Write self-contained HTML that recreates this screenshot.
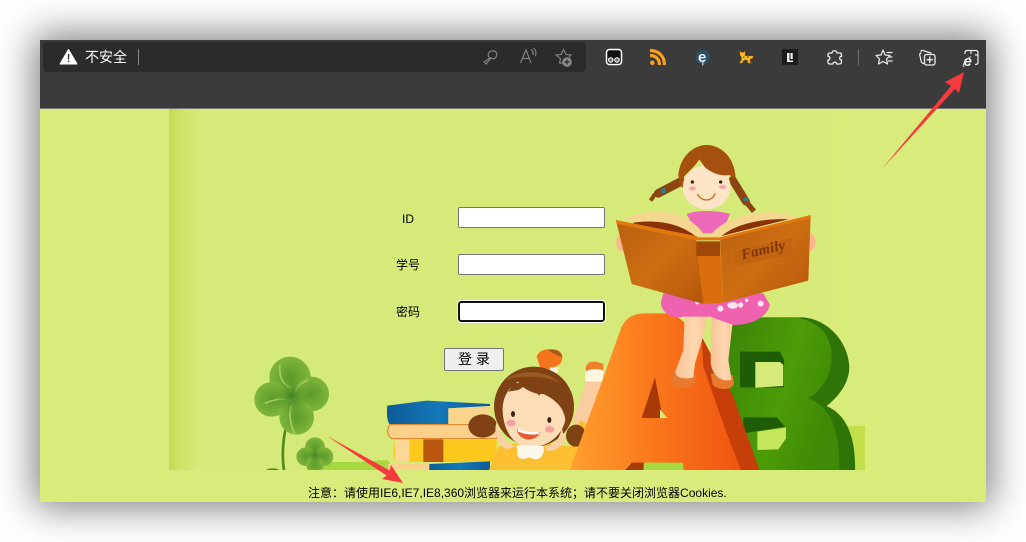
<!DOCTYPE html>
<html lang="zh"><head><meta charset="utf-8"><title>登录</title>
<style>
html,body{margin:0;padding:0;background:#fff}
body{width:1026px;height:542px;position:relative;overflow:hidden;font-family:"Liberation Sans","Noto Sans CJK SC",sans-serif}
#win{position:absolute;left:40px;top:40px;width:946px;height:462px;background:#d9ec7b;box-shadow:0 0 36px 5px rgba(0,0,0,.52)}
#bar{position:absolute;left:40px;top:40px;width:946px;height:68px;background:#3b3b3b;border-bottom:1px solid #777}
#addr{position:absolute;left:43px;top:42px;width:543px;height:30px;background:#2b2b2b;border-radius:4px}
#page{position:absolute;left:169px;top:109px;width:696px;height:361px;background:linear-gradient(90deg,#d6ea79,#d6ea79 85%,#d9ec7b)}
#stripe{position:absolute;left:169px;top:109px;width:30px;height:361px;background:linear-gradient(90deg,#c6da55,#cfe368 40%,#d6ea79)}
svg{position:absolute;left:0;top:0}
.t{position:absolute;white-space:nowrap;color:#000;font-size:12px;line-height:16px}
.i{position:absolute;box-sizing:border-box;left:458px;width:147px;height:21px;background:#fff;border:1px solid #767676;border-radius:2px}
#btn{position:absolute;box-sizing:border-box;left:444px;top:348px;width:60px;height:23px;background:#efefef;border:1px solid #767676;border-radius:2px;font-size:14px;line-height:21px;text-align:center;color:#000}
</style></head><body>
<div id="win"></div><div id="bar"></div><div id="addr"></div><div id="page"></div><div id="stripe"></div>

<svg width="1026" height="542" viewBox="0 0 1026 542">
<defs>
<clipPath id="c"><rect x="169" y="109" width="696" height="361"/></clipPath>
<linearGradient id="ga" x1="0" y1="0" x2="1" y2="0"><stop offset="0" stop-color="#ffa030"/><stop offset=".45" stop-color="#fb7a1c"/><stop offset="1" stop-color="#ef5510"/></linearGradient>
<linearGradient id="gb" x1="0" y1="0" x2="1" y2="1"><stop offset="0" stop-color="#b8600f"/><stop offset=".5" stop-color="#cd6e12"/><stop offset="1" stop-color="#b4560c"/></linearGradient>
<linearGradient id="gl" x1="0" y1="0" x2="1" y2="0"><stop offset="0" stop-color="#f8c498"/><stop offset=".6" stop-color="#ffd8b0"/><stop offset="1" stop-color="#f8c496"/></linearGradient>
<linearGradient id="gg" x1="0" y1="0" x2="1" y2=".4"><stop offset="0" stop-color="#3a8408"/><stop offset=".6" stop-color="#4c9c08"/><stop offset="1" stop-color="#3f8a06"/></linearGradient>
<linearGradient id="gbl" x1="0" y1="0" x2="1" y2="0"><stop offset="0" stop-color="#0d5a98"/><stop offset=".5" stop-color="#1578b8"/><stop offset="1" stop-color="#0d5a98"/></linearGradient>
<radialGradient id="gc" cx=".5" cy=".5" r=".6"><stop offset="0" stop-color="#5b9a2a"/><stop offset="1" stop-color="#86bc40"/></radialGradient>
<radialGradient id="gcc" cx=".5" cy=".5" r=".5"><stop offset="0" stop-color="#3f8220"/><stop offset="1" stop-color="#5b9a2a" stop-opacity="0"/></radialGradient>
</defs>
<g clip-path="url(#c)">
<rect x="825" y="426" width="40" height="44" fill="#c3e04a"/>
<rect x="320" y="462" width="70" height="8" fill="#a8d840"/>

<!-- zoom 5 coords: clover, books -->
<g transform="translate(240 340) scale(.33333)">
<path d="M136 270C128 310 126 350 132 392" fill="none" stroke="#4d8a20" stroke-width="8"/>
<g fill="url(#gc)"><circle cx="150" cy="112" r="62"/><circle cx="95" cy="178" r="52"/><circle cx="215" cy="162" r="52"/><circle cx="170" cy="232" r="52"/></g>
<path d="M120 75C115 120 135 135 155 145M205 120C180 130 170 140 165 160M75 190C110 175 130 175 145 180M165 285C150 250 145 220 155 195" stroke="#a4cf62" stroke-width="5" fill="none"/>
<circle cx="155" cy="170" r="55" fill="url(#gcc)"/>
<path d="M214 390L222 340" stroke="#4d8a20" stroke-width="4"/>
<g fill="url(#gc)"><circle cx="225" cy="322" r="30"/><circle cx="197" cy="350" r="28"/><circle cx="252" cy="350" r="28"/><circle cx="225" cy="375" r="26"/></g>
<circle cx="225" cy="345" r="26" fill="url(#gcc)"/>
<path d="M240 390C300 370 360 365 445 360V392H240Z" fill="#a8d840"/>
<ellipse cx="98" cy="392" rx="20" ry="7" fill="#4b8a20"/>
<!-- books -->
<path d="M442 197L560 182L750 192V198L625 205V252H448C440 240 440 215 442 197Z" fill="url(#gbl)"/>
<path d="M625 205L750 198V250H625Z" fill="#fbd48c"/>
<path d="M450 254H770V296H455C440 285 440 265 450 254Z" fill="#fbd08a" stroke="#e07a20" stroke-width="3"/>
<path d="M465 300H770V366H465C460 345 460 320 465 300Z" fill="#fcc81e"/>
<path d="M465 300H508V366H465Z" fill="#fbd898"/>
<rect x="550" y="298" width="60" height="68" fill="#b9560f"/>
<path d="M445 372H570V392H445Z" fill="#fbd08a"/>
<path d="M568 372L750 364V392H568Z" fill="url(#gbl)"/>
</g>

<!-- zoom 12 coords: lying girl (origin 480,340) -->
<g transform="translate(480 340) scale(.33333)">
<path d="M170 50C175 30 200 25 225 28C248 32 252 55 240 72L212 88L180 82Z" fill="#f5741c"/>
<path d="M205 30C225 25 245 35 248 52C230 45 215 40 205 30Z" fill="#a85c1c"/>
<rect x="210" y="82" width="24" height="16" fill="#fff6e0"/>
<path d="M318 90C315 70 330 62 350 65L370 72V118L318 120Z" fill="#f07f2c"/>
<path d="M316 96C330 85 355 85 370 92V132L316 124Z" fill="#fff6e0"/>
<path d="M318 125L370 125V240L300 290L280 240Z" fill="#f9cda0"/>
<path d="M25 395L55 320L110 310H200L270 320L300 240L340 260L320 395Z" fill="#fcbf32"/>
<ellipse cx="8" cy="258" rx="43" ry="35" fill="#7e4214"/>
<ellipse cx="288" cy="287" rx="30" ry="33" fill="#7e4214"/>
<ellipse cx="162" cy="200" rx="120" ry="120" fill="#7e4214"/>
<path d="M75 120C110 90 200 85 240 130C200 105 120 105 75 120Z" fill="#9a5a24"/>
<path d="M68 215C65 165 95 135 115 125C130 150 170 165 190 162C220 175 252 200 256 240C245 290 200 322 150 322C105 320 72 280 68 215Z" fill="#fddcb8"/>
<path d="M100 130L85 155L115 150L140 135L180 168L175 140L190 120Z" fill="#7e4214"/>
<ellipse cx="99" cy="222" rx="6" ry="9" fill="#3a2410"/><ellipse cx="208" cy="240" rx="6" ry="9" fill="#3a2410"/>
<ellipse cx="93" cy="249" rx="14" ry="10" fill="#f7a0a0"/><ellipse cx="209" cy="268" rx="14" ry="10" fill="#f7a0a0"/>
<path d="M110 265C135 278 155 280 180 275C175 295 155 300 140 298C125 295 112 285 110 265Z" fill="#ea5a30"/>
<path d="M112 266C135 276 155 278 178 274L176 282C155 286 130 282 114 274Z" fill="#fff"/>
<path d="M50 245C58 290 85 315 108 318L80 328C50 315 40 275 50 245Z" fill="#fad0a4"/>
<path d="M195 320C225 315 240 295 245 262L254 300C245 322 225 335 200 332Z" fill="#fad0a4"/>
<path d="M110 315L190 318C195 340 185 358 165 358L145 352C135 360 115 358 112 345Z" fill="#fff8ea"/>
</g>

<!-- zoom 4 coords: A and B -->
<g transform="translate(560 300) scale(.33333)">
<rect x="230" y="488" width="150" height="22" fill="#a8d840"/>
<path d="M560 52H730C810 60 865 130 868 200C868 250 835 290 800 318C860 345 888 410 885 515H600Z" fill="#2e7406"/>
<path d="M510 52H700C780 60 815 110 815 170C815 230 785 270 745 295C810 320 840 380 838 515H580L500 300Z" fill="url(#gg)"/>
<path d="M540 155H660L672 180V262H540Z" fill="#1f5c06"/>
<path d="M586 186H660L670 195V258L586 263Z" fill="#d6ea79"/>
<path d="M550 352H650L675 380L550 400Z" fill="#1f5c06"/>
<path d="M592 395L678 382V415L655 448L592 450Z" fill="#c6e65c"/>
<!-- A side -->
<path d="M420 100L520 290L600 515H530L420 240Z" fill="#c63f0a"/>
<!-- A front -->
<path d="M28 515L185 80C200 50 225 40 255 40H340L425 110L430 200L500 400L545 515H372L352 490H210L190 515Z" fill="url(#ga)"/>
<path d="M285 232L245 354H308Z" fill="#a83a08"/>
<path d="M300 328L322 354H300Z" fill="#d6ea79"/>
<path d="M190 515L215 488H252L250 515Z" fill="#a83a08"/>
<path d="M252 488H368L372 515H250Z" fill="#a8d840"/>
<!-- shoes -->
<path d="M330 245C335 262 375 272 405 252L408 225L345 210Z" fill="#e87a30"/>
<path d="M518 225L452 220L458 255C480 272 515 272 522 250Z" fill="#e87a30"/>
<!-- legs -->
<path d="M375 25H445L435 90L405 190L400 232C370 240 345 232 346 215L370 150Z" fill="url(#gl)"/>
<path d="M455 35H522L505 180L515 240C490 245 460 235 452 190Z" fill="url(#gl)"/>
</g>

<!-- zoom 3 coords: reading girl -->
<g transform="translate(590 130) scale(.33333)">
<!-- skirt -->
<path d="M220 490H520L540 525C530 560 490 585 430 585L360 560L280 560C240 570 210 540 213 515Z" fill="#ee62b0"/>
<g fill="#fbe4f2"><ellipse cx="428" cy="526" rx="16" ry="10"/><circle cx="452" cy="525" r="8"/><circle cx="391" cy="536" r="9"/><circle cx="512" cy="521" r="9"/><circle cx="322" cy="517" r="6"/><circle cx="470" cy="511" r="5"/></g>
<!-- braids -->
<path d="M272 155L205 190" stroke="#8a4510" stroke-width="26" stroke-linecap="round" fill="none"/>
<path d="M195 192L182 212" stroke="#8a4510" stroke-width="12" fill="none"/>
<path d="M428 150L468 215" stroke="#8a4510" stroke-width="24" stroke-linecap="round" fill="none"/>
<path d="M468 215L492 244" stroke="#8a4510" stroke-width="16" fill="none"/>
<circle cx="220" cy="182" r="8" fill="#2f7c90"/><circle cx="468" cy="208" r="7" fill="#2f7c90"/>
<!-- body -->
<path d="M290 252C320 240 380 240 420 252L395 310H320Z" fill="#ee68b8"/>
<ellipse cx="350" cy="172" rx="72" ry="66" fill="#fde4c6"/>
<path d="M265 135C270 80 310 45 350 45C395 45 435 85 437 145L418 135C390 140 365 128 345 112L328 88C310 115 295 125 282 140L278 175L268 160Z" fill="#a5500e"/>
<circle cx="307" cy="156" r="5" fill="#3a2410"/><circle cx="392" cy="156" r="5" fill="#3a2410"/>
<ellipse cx="307" cy="175" rx="11" ry="6" fill="#f7a8a8"/><ellipse cx="398" cy="171" rx="11" ry="6" fill="#f7a8a8"/>
<path d="M322 192C335 216 365 216 376 190" fill="none" stroke="#c9701c" stroke-width="4"/>
<!-- hands -->
<ellipse cx="96" cy="338" rx="17" ry="25" fill="#fdb68e"/><ellipse cx="658" cy="336" rx="19" ry="27" fill="#fdb68e"/>
<!-- pages -->
<path d="M100 268C170 232 290 230 345 318H360C420 240 560 235 625 262L390 322L335 322Z" fill="#f5d68f"/>
<path d="M130 278C200 268 270 280 318 320L130 282Z" fill="#8a3208"/>
<path d="M395 318C440 278 530 264 595 268Z" fill="#8a3208"/>
<!-- cover -->
<path d="M78 272L318 322L340 522L125 462Z" fill="url(#gb)"/>
<path d="M390 322L662 256L655 452L400 518Z" fill="url(#gb)"/>
<path d="M78 270L318 318L325 322H390L662 255L660 265L390 330H318L80 282Z" fill="#e0780c"/>
<path d="M318 332H390L400 518L340 522Z" fill="#d96f0c"/>
<rect x="319" y="336" width="71" height="42" fill="#9f4808"/>
<path d="M435 362L605 325L605 375L435 408Z" fill="#c06210" opacity=".8"/>
<text x="0" y="0" transform="translate(457 388) rotate(-13)" font-family="'Liberation Serif',serif" font-style="italic" font-weight="bold" font-size="44" fill="#7a3808" letter-spacing="1">Family</text>
</g>
</g>
<!-- red arrows -->
<path d="M881 170L951 86L945 82L964 72L959 93L955 89Z" fill="#f43a3c"/>
<path d="M327 436L389.600 470.500L391 465L403 483L382 479L386.500 475.500Z" fill="#f43a3c"/>

<!-- toolbar icons -->
<path d="M68.500 49.500L77 64H60Z" fill="#fff" stroke="#fff" stroke-linejoin="round"/>
<rect x="67.900" y="54" width="1.300" height="5.500" fill="#2b2b2b"/><rect x="67.900" y="60.500" width="1.300" height="1.500" fill="#2b2b2b"/>
<rect x="138" y="49" width="1" height="16" fill="#8a8a8a"/>
<g fill="none" stroke="#868686" stroke-width="1.100">
<path d="M490 58C487 56 488 51 492 51C496 50 498 54 496 57C495 59 492 59 491 58L486 64L484 62Z"/>
<path d="M520.500 63L526 50L531 63M522.500 58.500H529.500"/>
<path d="M531 49.500C533 51 533.500 53 533 55M533.500 48C536 50 536.500 53 535.500 56"/>
<path d="M559.500 63.500L560.500 58.500L556 55L561 54.500L563.500 49.500L566 54.500L571 55L569 57.500M560 63.500L564 62"/>
</g>
<circle cx="567" cy="62" r="4.800" fill="#8a8a8a"/><path d="M567 59.500V64.500M564.500 62H569.500" stroke="#2b2b2b" stroke-width="1.200"/>

<rect x="606.500" y="49.500" width="15" height="15" rx="3" fill="#111" stroke="#fff" stroke-width="1.500"/>
<circle cx="610.800" cy="60" r="2.300" fill="#777" stroke="#fff"/><circle cx="617" cy="60" r="2.300" fill="#777" stroke="#fff"/>

<circle cx="652.300" cy="62.800" r="2.300" fill="#fa9f1e"/>
<path d="M650 55.500C656 55.500 659.500 59.500 659.500 65M650 50.500C659 50.500 664.500 56.500 664.500 65" fill="none" stroke="#fa9f1e" stroke-width="3.200"/>

<circle cx="702.700" cy="57" r="7.300" fill="#2c4f68"/><rect x="702" y="62" width="1.500" height="3.500" fill="#a9b8c4"/>
<text x="698" y="62" font-family="'Liberation Sans',sans-serif" font-weight="bold" font-size="15" fill="#f2f6f9">e</text>

<path d="M740 51L741.500 52.500H743.500L745 51V56H753V58L750 59V62.500L752 63H748L747.500 60H744L742 63H739.500L741.500 60V57L740 55Z" fill="#f4c314" stroke="#d8602a" stroke-width=".4"/>
<rect x="743" y="56.500" width="1.500" height="1.500" fill="#a06010"/><rect x="747" y="56.500" width="1.500" height="1.500" fill="#a06010"/>

<rect x="782" y="49" width="16" height="16" fill="#1c1c1c"/>
<path d="M787 53H789.500V60.500H793V62H787Z" fill="#f0f0f0"/><rect x="790.500" y="53" width="2.200" height="6" fill="#f0f0f0"/>

<g fill="none" stroke="#ececec" stroke-width="1.300" stroke-linejoin="round" stroke-linecap="round">
<path d="M832 53C832 50 837 50 837 53H840C841.500 53 841.500 54 841.500 55V56.500C839 56 839 60.500 841.500 60V62C841.500 63.500 840.500 64 839 64H836.500C837 61.500 832.500 61.500 833 64H830C828.500 64 828 63 828 62V60C830.500 60.500 830.500 56 828 56.500V55C828 53.500 829 53 830 53Z"/>
<path d="M883 50L885.200 55L890 55.500L886.500 59L887.500 64L883 61.500L878.500 64L879.500 59L876 55.500L881 55Z" stroke-width="1.200"/>
<path d="M887 52.500H892M888.500 57H892M888.500 61H892" stroke-width="1.200"/>
<path d="M921 53C919.500 53.500 919.500 55 920 56L921 61C921.500 62.500 922.500 63.500 924 63.500" stroke-width="1.200"/>
<path d="M921 51.500C921 50.500 922 50 923 50.500L931 53" stroke-width="1.200"/>
<rect x="924.500" y="54.500" width="10.500" height="10.500" rx="2"/>
<path d="M929.700 57V62.500M927 59.800H932.500"/>
<path d="M965 57V52.500C965 51 966 50.500 967.500 50.500H976C977.500 50.500 978 51.500 978 53V62C978 63.500 977 64.500 975.500 64.500H973M971 50.500V55H978" stroke-width="1.200"/>
</g>
<rect x="858" y="49" width="1" height="16" fill="#6d6d6d"/>
<rect x="962" y="54" width="13" height="13" fill="#3b3b3b"/>
<text x="963.500" y="66" font-family="'Liberation Sans',sans-serif" font-weight="bold" font-style="italic" font-size="15" fill="#fff">e</text>
<path d="M964 67C962 65 965 60 971 56.500" fill="none" stroke="#ddd"/>
</svg>

<div class="t" style="left:85px;top:49px;font-size:14px;color:#fff">不安全</div>
<div class="t" style="left:402px;top:211px">ID</div>
<div class="t" style="left:396px;top:257px">学号</div>
<div class="t" style="left:396px;top:304px">密码</div>
<div class="i" style="top:207px"></div>
<div class="i" style="top:254px"></div>
<div class="i" style="top:301px;border:2px solid #101010;border-radius:3px;outline:1px solid #fff"></div>
<div id="btn">登 录</div>
<div class="t" style="left:308px;top:485px">注意：请使用IE6,IE7,IE8,360浏览器来运行本系统；请不要关闭浏览器Cookies.</div>
</body></html>
